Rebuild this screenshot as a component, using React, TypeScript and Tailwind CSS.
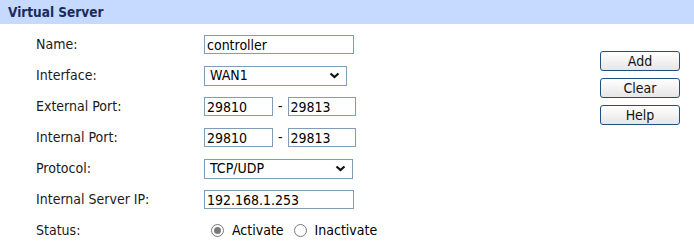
import React from "react";

const font = "font-['Tahoma','DejaVu_Sans_Condensed','DejaVu_Sans',sans-serif]";
const label = "text-[14px] text-[#1a1a1a]";
const field = "h-[19px] border border-[#7f9db9] bg-white px-[2px] text-[14px] leading-[17px] text-black";
const rowCls = "flex h-[31px] items-center";
const btnCls =
  "h-[20px] w-[80px] rounded-[3px] border border-[#1f4f86] bg-gradient-to-b from-white to-[#e6e6e6] text-[14px] leading-[18px] text-[#111]";

function Chevron() {
  return (
    <svg width="11" height="7" viewBox="0 0 11 7" className="shrink-0">
      <path d="M1.5 1.5 L5.5 5 L9.5 1.5" fill="none" stroke="#111" strokeWidth="2.2" />
    </svg>
  );
}

function Select({ value, width }: { value: string; width: string }) {
  return (
    <div className={`flex h-[20px] items-center justify-between border border-[#7f9db9] bg-white pl-[5px] pr-[6px] text-[14px] ${width}`}>
      <span>{value}</span>
      <Chevron />
    </div>
  );
}

function Radio({ checked }: { checked?: boolean }) {
  return (
    <span className="flex h-[13px] w-[13px] shrink-0 items-center justify-center rounded-full border border-[#7a7a7a] bg-white">
      {checked && <span className="h-[7px] w-[7px] rounded-full bg-[#7a7a7a]" />}
    </span>
  );
}

function Row({ name, children }: { name: string; children: React.ReactNode }) {
  return (
    <div className={rowCls}>
      <div className={`w-[168px] ${label}`}>{name}</div>
      <div className="flex items-center">{children}</div>
    </div>
  );
}

export default function App() {
  return (
    <div className={`h-[245px] w-[694px] bg-white ${font}`}>
      <div className="flex h-[24px] items-center bg-[#c6d9ff] pl-[8px] text-[13.5px] font-bold text-[#1c2a5e]">
        Virtual Server
      </div>
      <div className="flex">
        <div className="pl-[36px] pt-[5px]">
          <Row name="Name:">
            <input readOnly value="controller" className={`${field} w-[150px]`} />
          </Row>
          <Row name="Interface:">
            <Select value="WAN1" width="w-[143px]" />
          </Row>
          <Row name="External Port:">
            <input readOnly value="29810" className={`${field} w-[69px]`} />
            <span className="px-[5px] text-[14px]">-</span>
            <input readOnly value="29813" className={`${field} w-[68px]`} />
          </Row>
          <Row name="Internal Port:">
            <input readOnly value="29810" className={`${field} w-[69px]`} />
            <span className="px-[5px] text-[14px]">-</span>
            <input readOnly value="29813" className={`${field} w-[68px]`} />
          </Row>
          <Row name="Protocol:">
            <Select value="TCP/UDP" width="w-[149px]" />
          </Row>
          <Row name="Internal Server IP:">
            <input readOnly value="192.168.1.253" className={`${field} w-[150px]`} />
          </Row>
          <Row name="Status:">
            <div className="flex items-center pl-[7px] text-[14px]">
              <Radio checked />
              <span className="ml-[8px]">Activate</span>
              <span className="ml-[10px]">
                <Radio />
              </span>
              <span className="ml-[8px]">Inactivate</span>
            </div>
          </Row>
        </div>
        <div className="ml-auto mr-[14px] mt-[27px] flex flex-col gap-[7px]">
          <button className={btnCls}>Add</button>
          <button className={btnCls}>Clear</button>
          <button className={btnCls}>Help</button>
        </div>
      </div>
    </div>
  );
}
